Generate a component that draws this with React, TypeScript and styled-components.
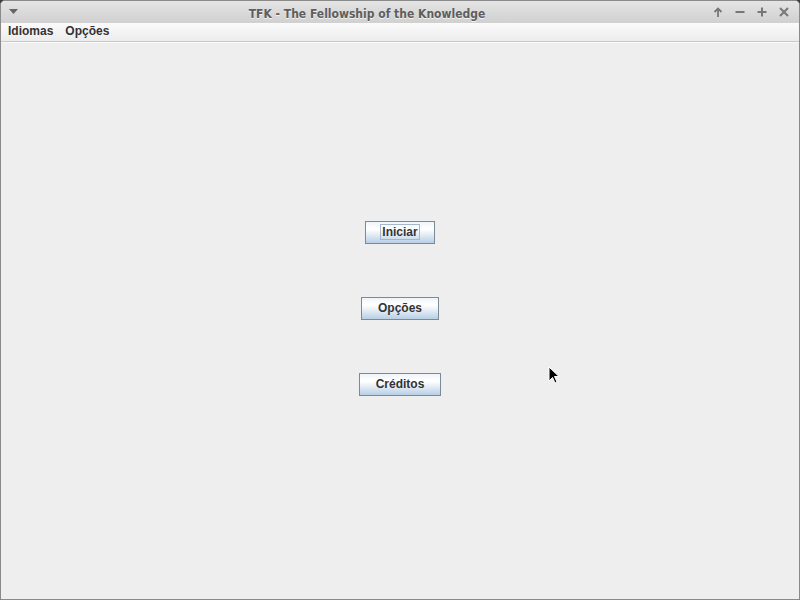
import React from 'react';
import styled, { createGlobalStyle } from 'styled-components';

const GlobalStyle = createGlobalStyle`
  html, body {
    margin: 0;
    padding: 0;
    background: #3c3c3c;
  }
  #root {
    width: 800px;
    height: 600px;
  }
`;

const Frame = styled.div`
  position: relative;
  width: 800px;
  height: 600px;
  box-sizing: border-box;
  display: flex;
  flex-direction: column;
  border: 1px solid #8a8a8a;
  border-radius: 5px 5px 0 0;
  background: #eeeeee;
  overflow: hidden;
  font-family: 'Liberation Sans', Arial, sans-serif;
`;

const TitleBar = styled.div`
  height: 22px;
  display: flex;
  align-items: center;
  background: linear-gradient(#e4e4e4, #d0d0d0);
  padding: 0 9px 0 8px;
`;

const TitleText = styled.div`
  flex: 1;
  text-align: center;
  margin: 3px 0 0 4px;
  font-family: 'DejaVu Sans', sans-serif;
  font-stretch: condensed;
  font-weight: bold;
  font-size: 12px;
  color: #5e5e5e;
  text-shadow: 0 1px 0 #f4f4f4;
`;

const Controls = styled.div`
  display: flex;
  gap: 10px;
  align-items: center;
`;

const Glyph = styled.svg`
  display: block;
`;

const MenuBar = styled.div`
  height: 18px;
  display: flex;
  align-items: center;
  gap: 10px;
  padding: 0 6px;
  background: linear-gradient(#fbfbfb, #ececec);
  border-bottom: 1px solid #c8c8c8;
  box-shadow: 0 1px 0 #fafafa;
`;

const MenuItem = styled.span`
  font-size: 12px;
  font-weight: bold;
  color: #333333;
  padding: 0 1px;
  margin-top: -2px;
`;

const Content = styled.div`
  flex: 1;
  display: flex;
  flex-direction: column;
  align-items: center;
  gap: 53px;
  padding-top: 179px;
`;

const Button = styled.button<{ $w: number }>`
  width: ${p => p.$w}px;
  height: 23px;
  box-sizing: border-box;
  display: flex;
  align-items: center;
  justify-content: center;
  border: 1px solid #7a8a99;
  background: linear-gradient(#eef3f9 0%, #ffffff 30%, #ffffff 35%, #b8cfe5 100%);
  font-family: 'Liberation Sans', Arial, sans-serif;
  font-size: 12px;
  font-weight: bold;
  color: #333333;
  padding: 0 0 2px;
  cursor: default;
`;

const Focus = styled.span`
  border: 1px solid #a3b8cc;
  padding: 0 1px;
  line-height: 14px;
`;

const Pointer = styled.svg`
  position: absolute;
  left: 547px;
  top: 365px;
`;

export default function App() {
  return (
    <>
      <GlobalStyle />
      <Frame>
        <TitleBar>
          <Glyph width="9" height="6" viewBox="0 0 9 6">
            <path d="M0 0 H9 L4.5 5 Z" fill="#666" />
          </Glyph>
          <TitleText>TFK - The Fellowship of the Knowledge</TitleText>
          <Controls>
            <Glyph width="12" height="12" viewBox="0 0 12 12">
              <path d="M6 2.5 V11 M2.5 6 L6 2.5 L9.5 6" stroke="#777" strokeWidth="1.8" fill="none" />
            </Glyph>
            <Glyph width="12" height="12" viewBox="0 0 12 12">
              <path d="M1.5 6 H10.5" stroke="#777" strokeWidth="2" />
            </Glyph>
            <Glyph width="12" height="12" viewBox="0 0 12 12">
              <path d="M1.5 6 H10.5 M6 1.5 V10.5" stroke="#777" strokeWidth="2" />
            </Glyph>
            <Glyph width="12" height="12" viewBox="0 0 12 12">
              <path d="M2 2 L10 10 M10 2 L2 10" stroke="#777" strokeWidth="2" />
            </Glyph>
          </Controls>
        </TitleBar>
        <MenuBar>
          <MenuItem>Idiomas</MenuItem>
          <MenuItem>Opções</MenuItem>
        </MenuBar>
        <Content>
          <Button $w={70}>
            <Focus>Iniciar</Focus>
          </Button>
          <Button $w={78}>Opções</Button>
          <Button $w={82}>Créditos</Button>
        </Content>
        <Pointer width="12" height="19" viewBox="0 0 12 19">
          <path d="M1 1 V15 L4.5 11.5 L7 17 L9 16 L6.5 10.5 H11 Z" fill="#000" stroke="#fff" strokeWidth="1" />
        </Pointer>
      </Frame>
    </>
  );
}
